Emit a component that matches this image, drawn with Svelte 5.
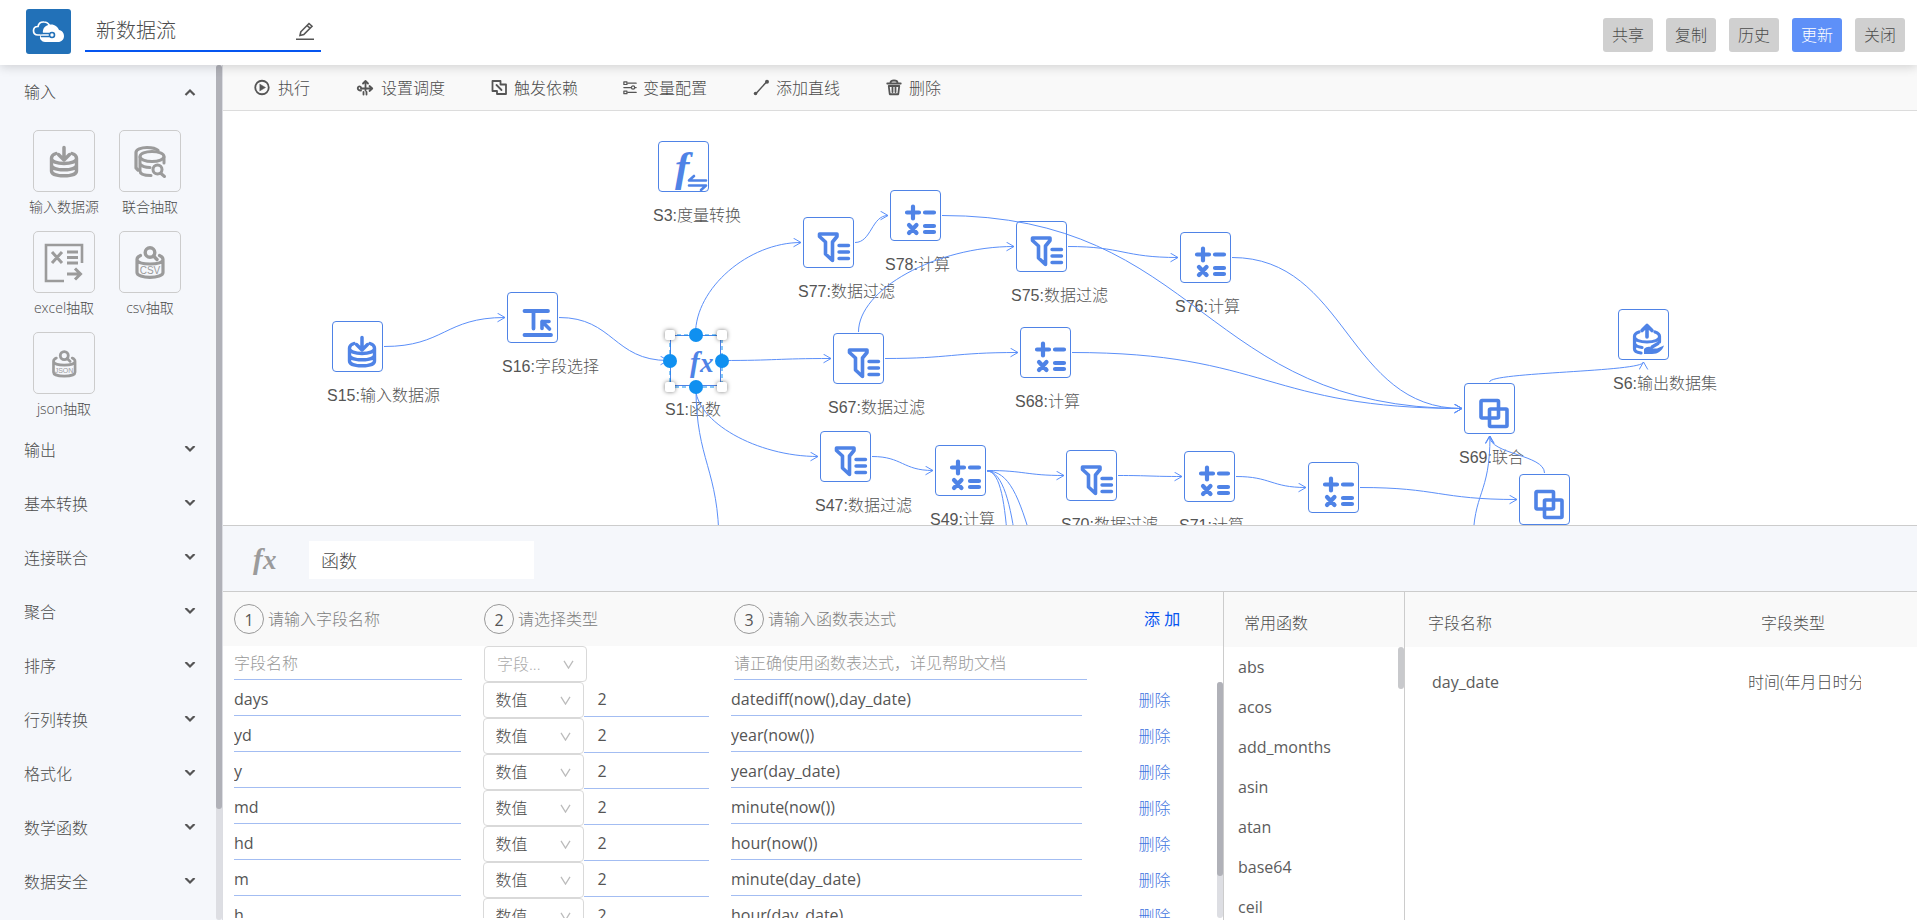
<script lang="ts">
  type Node = { id: string; icon: string; x: number; y: number; label?: string };

  const SIZE = 51;

  let flowName = $state('新数据流');
  let stepName = $state('函数');
  let openGroup = $state('输入');
  let selected = $state('S1');

  const actions = [
    { text: '共享' },
    { text: '复制' },
    { text: '历史' },
    { text: '更新', primary: true },
    { text: '关闭' },
  ];

  const groups = ['输入', '输出', '基本转换', '连接联合', '聚合', '排序', '行列转换', '格式化', '数学函数', '数据安全'];

  const inputs = [
    { icon: 'db', label: '输入数据源' },
    { icon: 'dbSearch', label: '联合抽取' },
    { icon: 'excel', label: 'excel抽取' },
    { icon: 'csv', label: 'csv抽取' },
    { icon: 'json', label: 'json抽取' },
  ];

  const tools = [
    { icon: 'run', text: '执行' },
    { icon: 'schedule', text: '设置调度' },
    { icon: 'trigger', text: '触发依赖' },
    { icon: 'vars', text: '变量配置' },
    { icon: 'line', text: '添加直线' },
    { icon: 'trash', text: '删除' },
  ];

  const nodes: Node[] = [
    { id: 'S15', icon: 'db', x: 109, y: 210, label: '输入数据源' },
    { id: 'S16', icon: 'pick', x: 284, y: 181, label: '字段选择' },
    { id: 'S3', icon: 'measure', x: 435, y: 30, label: '度量转换' },
    { id: 'S1', icon: 'fx', x: 447, y: 224, label: '函数' },
    { id: 'S77', icon: 'filter', x: 580, y: 106, label: '数据过滤' },
    { id: 'S78', icon: 'calc', x: 667, y: 79, label: '计算' },
    { id: 'S75', icon: 'filter', x: 793, y: 110, label: '数据过滤' },
    { id: 'S76', icon: 'calc', x: 957, y: 121, label: '计算' },
    { id: 'S67', icon: 'filter', x: 610, y: 222, label: '数据过滤' },
    { id: 'S68', icon: 'calc', x: 797, y: 216, label: '计算' },
    { id: 'S47', icon: 'filter', x: 597, y: 320, label: '数据过滤' },
    { id: 'S49', icon: 'calc', x: 712, y: 334, label: '计算' },
    { id: 'S70', icon: 'filter', x: 843, y: 339, label: '数据过滤' },
    { id: 'S71', icon: 'calc', x: 961, y: 340, label: '计算' },
    { id: 'S72', icon: 'calc', x: 1085, y: 351 },
    { id: 'S69', icon: 'union', x: 1241, y: 272, label: '联合' },
    { id: 'S73', icon: 'union', x: 1296, y: 363 },
    { id: 'S6', icon: 'output', x: 1395, y: 198, label: '输出数据集' },
  ];

  // [from, side, to, side]
  const links = [
    ['S15', 'right', 'S16', 'left'],
    ['S16', 'right', 'S1', 'left'],
    ['S1', 'top', 'S77', 'left'],
    ['S1', 'right', 'S67', 'left'],
    ['S1', 'bottom', 'S47', 'left'],
    ['S77', 'right', 'S78', 'left'],
    ['S67', 'top', 'S75', 'left'],
    ['S67', 'right', 'S68', 'left'],
    ['S75', 'right', 'S76', 'left'],
    ['S78', 'right', 'S69', 'left'],
    ['S76', 'right', 'S69', 'left'],
    ['S68', 'right', 'S69', 'left'],
    ['S47', 'right', 'S49', 'left'],
    ['S49', 'right', 'S70', 'left'],
    ['S70', 'right', 'S71', 'left'],
    ['S71', 'right', 'S72', 'left'],
    ['S72', 'right', 'S73', 'left'],
    ['S73', 'top', 'S69', 'bottom'],
    ['S69', 'top', 'S6', 'bottom'],
  ];

  // links whose other end is below the visible part of the canvas
  const openLinks = [
    'M473 277 C473 350 496 358 496 434',
    'M764 360 C778 360 782 395 785 434',
    'M764 360 C780 360 788 395 793 434',
    'M764 360 C786 360 796 385 810 434',
  ];

  function anchor(id: string, side: string, gap: number) {
    const n = nodes.find((item) => item.id === id)!;
    const half = SIZE / 2;
    if (side === 'left') return [n.x - gap, n.y + half];
    if (side === 'right') return [n.x + SIZE + gap, n.y + half];
    if (side === 'top') return [n.x + half, n.y - gap];
    return [n.x + half, n.y + SIZE + gap];
  }

  function route([from, a, to, b]: string[]) {
    const [x1, y1] = anchor(from, a, 1);
    const [x2, y2] = anchor(to, b, 2);
    const dx = (x2 - x1) / 2;
    const dy = (y2 - y1) / 2;
    const flat = (side: string) => side === 'left' || side === 'right';
    const c1 = flat(a) ? [x1 + dx, y1] : [x1, y1 + dy];
    const c2 = flat(b) ? [x2 - dx, y2] : [x2, y2 - dy];
    return `M${x1} ${y1} C${c1} ${c2} ${x2} ${y2}`;
  }

  let rows = $state([
    { name: 'days', digits: '2', expr: 'datediff(now(),day_date)' },
    { name: 'yd', digits: '2', expr: 'year(now())' },
    { name: 'y', digits: '2', expr: 'year(day_date)' },
    { name: 'md', digits: '2', expr: 'minute(now())' },
    { name: 'hd', digits: '2', expr: 'hour(now())' },
    { name: 'm', digits: '2', expr: 'minute(day_date)' },
    { name: 'h', digits: '2', expr: 'hour(day_date)' },
  ]);

  const functions = ['abs', 'acos', 'add_months', 'asin', 'atan', 'base64', 'ceil'];

  function removeRow(index: number) {
    rows.splice(index, 1);
  }
</script>

{#snippet icon(name: string)}
  <svg class="icon {name}" viewBox="0 0 32 32" fill="none" stroke="currentColor" stroke-width="3" stroke-linecap="round" stroke-linejoin="round" aria-hidden="true">
    {#if name === 'db'}
      <path d="M16 1.500V12M10.500 8.500L16 14L21.500 8.500" stroke-width="3.500" />
      <path d="M8 7.500C5 8.500 3.500 10 3.500 12V25C3.500 28 9 29.800 16 29.800S28.500 28 28.500 25V12C28.500 10 27 8.500 24 7.500M3.500 12.500C3.500 15.500 9 17.500 16 17.500S28.500 15.500 28.500 12.500M3.500 19C3.500 22 9 23.800 16 23.800S28.500 22 28.500 19" stroke-width="3.400" />
    {:else if name === 'dbSearch'}
      <ellipse cx="18" cy="10.500" rx="12" ry="5" />
      <path d="M6 11V25C6 28 11 29.500 17 29.500M30 11V17M6 18C8 20.500 12 21.500 16 21.500" />
      <path d="M2 22V6.500C2 3.500 7 1.500 13 1.500C18 1.500 22 2.500 24 4.500M2 22L4 24" stroke-width="3.200" />
      <circle cx="23.500" cy="23.500" r="4.500" />
      <path d="M27 27.500L30.500 30.500" />
    {:else if name === 'excel'}
      <path d="M16 34H-2V-2H34V16" stroke-width="2.600" stroke-linecap="butt" stroke-linejoin="miter" />
      <path d="M4 5L14 16M14 5L4 16M19 5H30M19 10.500H30M19 16H30" stroke-width="3" stroke-linecap="butt" />
      <path d="M19 27H32M27 21.500L32.500 27L27 32.500" stroke-width="3" stroke-linecap="butt" stroke-linejoin="miter" />
    {:else if name === 'csv' || name === 'json'}
      <g transform={name === 'json' ? 'translate(3 3) scale(.83)' : undefined}>
        <circle cx="16" cy="5.500" r="4.800" stroke-width="3.400" />
        <path d="M19.500 9L23 12.500" stroke-width="3.400" />
        <path d="M6.500 8.500C4 9.500 3 10.500 3 12.500V25.500C3 28.500 9 30.300 16 30.300S29 28.500 29 25.500V12.500C29 10.500 28 9.500 25.500 8.500M3 13C4 16 9 17 16 17S28 16 29 13" stroke-width="3.200" />
      </g>
      <text class="mark" class:small={name === 'json'} x="16" y={name === 'json' ? 25 : 27} text-anchor="middle">{name === 'csv' ? 'CSV' : 'JSON'}</text>
    {:else if name === 'pick'}
      <path d="M3.500 4H27M12.500 4V21.500M3.500 28H30" stroke-width="3.800" />
      <path d="M21 14.500V21.500M21 14.500H28M21 14.500L28.500 22" stroke-width="3.600" />
    {:else if name === 'filter'}
      <path d="M2.500 2H20V4.500L15.500 10V28.500L8.500 22V10L2.500 4.500Z" stroke-width="3.600" />
      <path d="M22 13.500H31.500M22 20H31.500M22 26.500H31.500" stroke-width="3.400" />
    {:else if name === 'calc'}
      <path d="M3 7.500H15M9 1.500V13.500M21 7.500H30M5 20L12.500 28M12.500 20L5 28M21 21H30M21 27H30" stroke-width="4.200" />
    {:else if name === 'union'}
      <rect x="3" y="2.500" width="17.500" height="17.500" rx="1" stroke-width="3.600" />
      <rect x="11.500" y="11" width="17.500" height="17.500" rx="1" stroke-width="3.600" />
    {:else if name === 'output'}
      <path d="M15 13V2M10 6.500L15 1.500L20 6.500" stroke-width="3.600" />
      <path d="M7 8C4 9 2.500 10.500 2.500 12.500V25C2.500 27 5 28.500 9 29M23 8C26 9 27.500 10.500 27.500 12.500V18M2.500 13C2.500 16 8 18 15 18S27.500 16 27.500 13M2.500 19.500C3.500 22 6 23 10 23.500M20 23L26 19.500" stroke-width="3.200" />
      <path d="M12 25C15 22 18 22 21 24.500H25L32 21.500C30 27 26 30 20 30L12 30Z" fill="currentColor" stroke="none" />
    {:else if name === 'measure'}
      <text class="letter" x="3" y="25" font-size="43">f</text>
      <path d="M34 24.500H17L22 20M17 29.500H34L29 34" stroke-width="2.600" />
    {:else if name === 'fx'}
      <text class="letter" x="6" y="22" font-size="29">f</text>
      <text class="letter" x="16" y="22" font-size="27">x</text>
    {:else if name === 'run'}
      <circle cx="16" cy="15" r="13.500" stroke-width="3.600" />
      <path d="M12 8.500L23 15L12 21.500Z" fill="currentColor" stroke-width="1" />
    {:else if name === 'schedule'}
      <path d="M8 21C3 21 1.500 19 1.500 16.500C1.500 14 4 12.500 6 13C8 13.500 8.500 15.500 8 17H30M25 12L30.500 17L25 22M17 21V2M12 7L17 2L22 7M13 24V29M19 24V29" stroke-width="3.600" />
    {:else if name === 'trigger'}
      <path d="M3 2H19V9H30V28H12V22H3Z" stroke-width="3.600" />
      <path d="M11 10L21 20" stroke-width="3.600" />
    {:else if name === 'vars'}
      <path d="M11 5H30M2 15H18M27 15H30M11 26H30" stroke-width="3" />
      <rect x="2" y="2" width="7" height="6" stroke-width="2.800" />
      <circle cx="23" cy="15" r="3.800" stroke-width="2.800" />
      <rect x="2" y="23" width="7" height="6" stroke-width="2.800" />
    {:else if name === 'line'}
      <path d="M6 27L27 4" />
      <circle cx="5" cy="27" r="3.500" fill="currentColor" stroke="none" />
      <circle cx="28" cy="3.500" r="4" fill="currentColor" stroke="none" />
    {:else if name === 'trash'}
      <path d="M2.500 7H29.500M9 5C9 2 11 1 16 1S23 2 23 5" stroke-width="3.600" />
      <path d="M5.500 12L7.500 28.500H24.500L26.500 12ZM13 15V24M19 15V24" stroke-width="3.600" />
    {/if}
  </svg>
{/snippet}

{#snippet caret()}
  <svg class="caret" viewBox="0 0 12 10" aria-hidden="true"><path d="M1 1L6 9L11 1" /></svg>
{/snippet}

<div class="app">
  <header class="topbar">
    <svg class="logo" viewBox="0 0 45 45" aria-hidden="true">
      <rect width="45" height="45" rx="3" fill="#2271b8" />
      <path d="M15 31C13 29 14 26 17 25C16 19 20 15.500 25 15.500C29 15.500 32 18 33 21C36 21.500 38 24 38 27C38 30.500 35.500 33 32 33H19C17 33 16 32 15 31Z" fill="#fff" />
      <path d="M25 26H12C9.500 26 7.500 24.500 7.500 21.800C7.500 19 9.500 17.500 12 17.500C12.500 14.500 15 12.800 18 13C20.500 13 22.500 14.500 23.500 16.500" fill="none" stroke="#fff" stroke-width="1.700" />
      <path d="M14 24.500H23M15 27.500H23" stroke="#2271b8" stroke-width="1.400" />
      <circle cx="26" cy="26" r="2.500" fill="#fff" stroke="#2271b8" stroke-width="1.600" />
    </svg>
    <div class="title">
      <input aria-label="数据流名称" bind:value={flowName} />
      <svg class="pencil" viewBox="0 0 18 18" aria-hidden="true">
        <path d="M0 17.200H18M4 13.500L4.800 9.800L13 1.500L16 4.200L7.800 12.500ZM11 3.500L14 6.200" />
      </svg>
    </div>
    <div class="actions">
      {#each actions as action}
        <button class:primary={action.primary}>{action.text}</button>
      {/each}
    </div>
  </header>

  <div class="body">
    <aside>
      <nav>
        {#each groups as group}
          <button class="group" aria-expanded={openGroup === group} onclick={() => (openGroup = openGroup === group ? '' : group)}>
            {group}
            <svg class="arrow" viewBox="0 0 12 8" aria-hidden="true">
              <path d={openGroup === group ? 'M1.500 7L6 2.500L10.500 7' : 'M1.500 0L6 4.500L10.500 0'} />
            </svg>
          </button>
          {#if group === '输入' && openGroup === group}
            <div class="tiles">
              {#each inputs as item}
                <div class="tile">
                  <div class="tile-box">{@render icon(item.icon)}</div>
                  <span>{item.label}</span>
                </div>
              {/each}
            </div>
          {/if}
        {/each}
      </nav>
      <div class="track"><div class="thumb side-thumb"></div></div>
    </aside>

    <main>
      <div class="toolbar">
        {#each tools as tool}
          <button>{@render icon(tool.icon)}{tool.text}</button>
        {/each}
      </div>

      <div class="canvas">
        {#each nodes as node}
          <!-- svelte-ignore a11y_click_events_have_key_events, a11y_no_static_element_interactions -->
          <div class="node" style:left="{node.x}px" style:top="{node.y}px" onclick={() => (selected = node.id)}>
            <div class="node-box">{@render icon(node.icon)}</div>
            {#if node.label}
              <span>{node.id}:{node.label}</span>
            {/if}
          </div>
        {/each}
        <svg class="links" aria-hidden="true">
          <defs>
            <marker id="tip" viewBox="0 0 9 10" markerWidth="9" markerHeight="10" refX="8" refY="5" orient="auto">
              <path d="M0.500 0.700L8 5L0.500 9.300" />
            </marker>
          </defs>
          {#each links as link}
            <path d={route(link)} marker-end="url(#tip)" />
          {/each}
          {#each openLinks as d}
            <path {d} />
          {/each}
          <path d="M1250 434C1250 380 1267 385 1267 325" marker-end="url(#tip)" />
          {#each nodes.filter((n) => n.id === selected) as n}
            <g class="selection">
              <rect x={n.x} y={n.y} width="52" height="52" />
              {#each [[0, 0], [52, 0], [0, 52], [52, 52]] as [cx, cy]}
                <rect class="handle" x={n.x + cx - 5} y={n.y + cy - 5} width="10" height="10" rx="2" />
              {/each}
              {#each [[26, 0], [52, 26], [26, 52], [0, 26]] as [cx, cy]}
                <circle cx={n.x + cx} cy={n.y + cy} r="7" />
              {/each}
            </g>
          {/each}
        </svg>
      </div>

      <section class="panel">
        <div class="panel-head">
          {@render icon('fx')}
          <input aria-label="步骤名称" bind:value={stepName} />
        </div>

        <div class="panel-body">
          <div class="editor">
            <div class="line steps">
              <div><b>1</b>请输入字段名称</div>
              <div><b>2</b>请选择类型</div>
              <div><b>3</b>请输入函数表达式</div>
              <div><button class="add">添 加</button></div>
            </div>
            <div class="line draft">
              <div><input aria-label="字段名称" placeholder="字段名称" /></div>
              <div>
                <label class="select">
                  <select aria-label="字段类型"><option>字段...</option></select>
                  {@render caret()}
                </label>
              </div>
              <div><input class="expr" aria-label="函数表达式" placeholder="请正确使用函数表达式，详见帮助文档" /></div>
            </div>
            <div class="rows">
              <div class="list">
                {#each rows as row, i}
                  <div class="line">
                    <div><input aria-label="字段名称" bind:value={row.name} /></div>
                    <div>
                      <label class="select">
                        <select aria-label="字段类型"><option>数值</option></select>
                        {@render caret()}
                      </label>
                      <input class="digits" aria-label="小数位" bind:value={row.digits} />
                    </div>
                    <div><input class="expr" aria-label="函数表达式" bind:value={row.expr} /></div>
                    <div><button class="remove" onclick={() => removeRow(i)}>删除</button></div>
                  </div>
                {/each}
              </div>
              <div class="track"><div class="thumb rows-thumb"></div></div>
            </div>
          </div>

          <div class="functions">
            <h3>常用函数</h3>
            <div class="functions-body">
              <ul>
                {#each functions as fn}
                  <li>{fn}</li>
                {/each}
              </ul>
              <div class="fn-thumb"></div>
            </div>
          </div>

          <div class="fields">
            <table>
              <colgroup><col class="c-name" /><col class="c-type" /><col /></colgroup>
              <thead>
                <tr><th>字段名称</th><th>字段类型</th><th></th></tr>
              </thead>
              <tbody>
                <tr><td>day_date</td><td>时间(年月日时分秒)</td><td></td></tr>
              </tbody>
            </table>
          </div>
        </div>
      </section>
    </main>
  </div>
</div>

<style>
  :global(body) {
    margin: 0;
    overflow: hidden;
  }

  .app {
    display: flex;
    flex-direction: column;
    height: 100vh;
    color: #4c4c4c;
    background: #fff;
    font: 300 16px/24px 'Open Sans', 'Noto Sans CJK SC', sans-serif;
  }

  .app * {
    box-sizing: border-box;
  }

  button,
  input,
  select {
    margin: 0;
    padding: 0;
    border: 0;
    background: none;
    color: inherit;
    font: inherit;
    outline: none;
  }

  button {
    cursor: pointer;
  }

  .icon {
    width: 32px;
    height: 32px;
    overflow: visible;
    flex: none;
  }

  .letter {
    fill: currentColor;
    stroke: none;
    font-family: 'Liberation Serif', serif;
    font-style: italic;
    font-weight: 700;
  }

  .mark {
    fill: currentColor;
    stroke: none;
    font: 400 10px 'Liberation Sans', sans-serif;
  }

  .mark.small {
    font-size: 7px;
  }

  /* top bar */
  .topbar {
    position: relative;
    z-index: 2;
    display: flex;
    align-items: center;
    flex: none;
    height: 65px;
    padding: 0 12px 0 26px;
    background: #fff;
    box-shadow: 0 2px 10px rgba(0, 0, 0, 0.16);
  }

  .logo {
    width: 45px;
    height: 45px;
    margin-bottom: 3px;
  }

  .title {
    display: flex;
    align-items: center;
    width: 236px;
    height: 40px;
    margin: 0 0 2px 14px;
    padding: 0 7px 0 11px;
    border-bottom: 2px solid #0555f0;
  }

  .title input {
    flex: 1;
    min-width: 0;
    font-size: 20px;
    line-height: 28px;
  }

  .pencil {
    width: 18px;
    height: 18px;
    fill: none;
    stroke: #555;
    stroke-width: 1.6;
  }

  .actions {
    display: flex;
    gap: 13px;
    margin-left: auto;
    padding-top: 5px;
  }

  .actions button {
    width: 50px;
    height: 34px;
    border-radius: 3px;
    background: #d0d0d0;
  }

  .actions .primary {
    background: #5e90f8;
    color: #fff;
  }

  .body {
    display: flex;
    flex: 1;
    min-height: 0;
  }

  /* sidebar */
  aside {
    display: flex;
    flex: none;
    width: 223px;
    border-right: 1px solid #dcdde2;
    background: #f5f7fb;
  }

  nav {
    flex: 1;
    overflow: hidden;
  }

  .group {
    display: flex;
    align-items: center;
    justify-content: space-between;
    width: 100%;
    height: 54px;
    padding: 0 20px 0 24px;
  }

  .arrow {
    width: 12px;
    height: 8px;
    fill: none;
    stroke: #555;
    stroke-width: 2.2;
  }

  .tiles {
    display: grid;
    grid-template-columns: repeat(2, 86px);
    row-gap: 9px;
    padding: 11px 0 0 21px;
    margin-bottom: -1px;
  }

  .tile {
    display: flex;
    flex-direction: column;
    align-items: center;
    font-size: 14px;
    line-height: 30px;
  }

  .tile-box {
    display: flex;
    align-items: center;
    justify-content: center;
    width: 62px;
    height: 62px;
    padding-top: 2px;
    border: 1px solid #ccc;
    border-radius: 5px;
    color: #9b9b9b;
  }

  .track {
    flex: none;
    width: 6px;
    border-radius: 3px;
    background: #dddee3;
  }

  .thumb {
    border-radius: 3px;
    background: #b0b1b8;
  }

  .side-thumb {
    height: 87%;
  }

  main {
    display: flex;
    flex-direction: column;
    flex: 1;
    min-width: 0;
  }

  /* toolbar */
  .toolbar {
    display: flex;
    align-items: center;
    gap: 46px;
    flex: none;
    height: 46px;
    padding: 0 30px;
    border-bottom: 1px solid #dcdcdc;
    background: #f9f9f9;
  }

  .toolbar button {
    display: flex;
    align-items: center;
    gap: 7px;
  }

  .toolbar .icon {
    width: 16px;
    height: 16px;
    color: #555;
  }

  .toolbar .run,
  .toolbar .schedule {
    width: 18px;
  }

  .toolbar .vars {
    width: 14px;
    margin: 0 -1px;
  }

  /* canvas */
  .canvas {
    position: relative;
    flex: 1;
    min-height: 0;
    overflow: hidden;
    background: #fff;
  }

  .links {
    position: absolute;
    inset: 0;
    width: 100%;
    height: 100%;
    fill: none;
    stroke: #5b8ff9;
    pointer-events: none;
  }

  .selection {
    stroke: #1090f0;
  }

  .selection > rect {
    stroke-dasharray: 4 3;
  }

  .selection circle {
    fill: #1090f0;
    stroke: none;
  }

  .selection .handle {
    fill: #fff;
    stroke: none;
    filter: drop-shadow(0 0 2px rgba(0, 0, 0, 0.5));
  }

  .node {
    position: absolute;
    display: flex;
    flex-direction: column;
    gap: 12px;
    font-family: 'Liberation Sans', 'Noto Sans CJK SC', sans-serif;
    white-space: nowrap;
  }

  .node span {
    margin-left: -5px;
    color: #555;
  }

  .node-box {
    width: 51px;
    height: 51px;
    padding: 14px 0 0 13px;
    border: 1px solid #4f83e6;
    border-radius: 4px;
    color: #4f83e6;
  }

  /* step panel */
  .panel {
    display: flex;
    flex-direction: column;
    flex: none;
    height: 395px;
    border-top: 1px solid #ccc;
  }

  .panel-head {
    display: flex;
    align-items: center;
    flex: none;
    height: 66px;
    padding: 2px 0 0 24px;
    border-bottom: 1px solid #ccc;
    background: #f5f7fb;
    color: #9b9b9b;
  }

  .panel-head .icon {
    margin-top: 6px;
  }

  .panel-head input {
    width: 225px;
    height: 38px;
    margin-left: 30px;
    padding: 0 12px;
    background: #fff;
    color: #4c4c4c;
    font-size: 18px;
  }

  .panel-body {
    display: grid;
    grid-template-columns: 1001fr 181fr 512fr;
    flex: 1;
    min-height: 0;
  }

  .editor {
    display: flex;
    flex-direction: column;
    min-width: 0;
    min-height: 0;
    padding-bottom: 2px;
    border-right: 1px solid #ccc;
  }

  .line {
    display: grid;
    grid-template-columns: 25% 25% 41% 9%;
    flex: none;
    height: 36px;
  }

  .line > div {
    display: flex;
    align-items: flex-start;
    min-width: 0;
    padding: 0 11px;
  }

  .line input {
    width: 100%;
    height: 34px;
    border-bottom: 1px solid #a3bdf2;
  }

  .list input {
    color: #555;
    font-weight: 400;
  }

  .line .expr {
    width: 91%;
  }

  .line .digits {
    flex: 1;
    height: 35px;
    min-width: 0;
    padding-left: 13px;
  }

  .steps {
    height: 54px;
    background: #f9f9f9;
    color: #808080;
  }

  .steps > div {
    align-items: center;
    gap: 4px;
    padding-right: 0;
    white-space: nowrap;
  }

  .steps b {
    width: 30px;
    height: 30px;
    border: 1px solid #999;
    border-radius: 50%;
    color: #555;
    font-weight: 400;
    line-height: 30px;
    text-align: center;
  }

  .add {
    color: #0555f0;
    font-weight: 400;
  }

  .remove {
    height: 36px;
    color: #3f75e0;
  }

  .select {
    position: relative;
    flex: none;
    width: 45%;
    height: 36px;
  }

  select {
    width: 100%;
    height: 36px;
    padding-left: 12px;
    border: 1px solid #d9d9d9;
    border-radius: 4px;
    appearance: none;
  }

  .caret {
    position: absolute;
    top: 14px;
    right: 13px;
    width: 11px;
    height: 9px;
    fill: none;
    stroke: #bbb;
    stroke-width: 1.4;
    pointer-events: none;
  }

  .draft select {
    color: #aaa;
  }

  input::placeholder {
    color: #999;
    opacity: 1;
  }

  .rows {
    display: flex;
    flex: 1;
    min-height: 0;
  }

  .list {
    flex: 1;
    min-width: 0;
    overflow: hidden;
  }

  .rows-thumb {
    height: 82%;
  }

  /* function list */
  .functions {
    display: flex;
    flex-direction: column;
    min-height: 0;
    border-right: 1px solid #ccc;
  }

  h3 {
    flex: none;
    height: 55px;
    margin: 0;
    padding: 19px 0 0 20px;
    background: #f9f9f9;
    font-size: 16px;
    font-weight: 300;
  }

  .functions-body {
    display: flex;
    flex: 1;
    min-height: 0;
    overflow: hidden;
  }

  ul {
    flex: 1;
    margin: 0;
    padding: 0 0 0 14px;
    list-style: none;
  }

  li {
    color: #5c5c5c;
    font-weight: 400;
    line-height: 40px;
  }

  .fn-thumb {
    width: 6px;
    height: 42px;
    border-radius: 3px;
    background: #c8c9cc;
  }

  /* field table */
  .fields {
    min-width: 0;
    overflow: hidden;
  }

  table {
    width: 100%;
    border-spacing: 0;
    table-layout: fixed;
  }

  .c-name {
    width: 67%;
  }

  .c-type {
    width: 22%;
  }

  th {
    height: 55px;
    padding: 7px 0 0 13px;
    background: #f9f9f9;
    font-weight: 300;
    text-align: left;
  }

  th:first-child {
    padding-left: 23px;
  }

  td {
    height: 70px;
    padding: 0;
    overflow: hidden;
    white-space: nowrap;
  }

  td:first-child {
    padding-left: 27px;
    color: #5c5c5c;
    font-weight: 400;
  }
</style>
